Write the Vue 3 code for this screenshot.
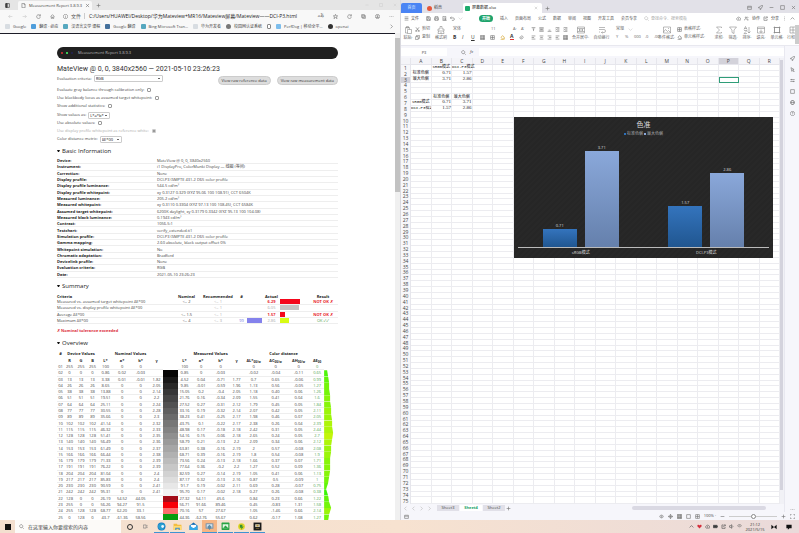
<script setup>
import { h } from 'vue'

const paths = {
  file: 'M3 1h7l3 3v11H3zM10 1v4h3',
  panel: 'M2 2h12v12H2zM3 2h4v12H3zM4 2v12M5 2v12M6 2v12',
  close: 'M3 3l10 10M13 3L3 13',
  plus: 'M8 2v12M2 8h12',
  minus: 'M2 8h12',
  back: 'M14 8H2M7 3L2 8l5 5',
  forward: 'M2 8h12M9 3l5 5-5 5',
  reload: 'M13 5a6 6 0 1 0 1 4M14 1v5H9',
  home: 'M2 8l6-6 6 6M4 7v7h3v-4h2v4h3V7',
  info: 'M8 1a7 7 0 1 0 .1 0M8 7v5M8 4v1',
  star: 'M8 1l2 5h5l-4 3 2 6-5-4-5 4 2-6-4-3h5z',
  box: 'M2 2h12v12H2z',
  win: 'M2 4h12v10H2zM2 7h12',
  stack: 'M2 2h9v9H2zM5 11v3h9V5h-3M4 6h5M6 4v5',
  user: 'M8 1a7 7 0 1 0 .1 0M8 4a2 2 0 1 0 .1 0M4 12c1-4 7-4 8 0M5 11h6',
  dots: 'M2 8h2M7 8h2M12 8h2',
  vdots: 'M8 2v2M8 7v2M8 12v2',
  chevron: 'M5 2l6 6-6 6',
  left: 'M11 2L5 8l6 6',
  up: 'M2 11l6-6 6 6',
  down: 'M2 5l6 6 6-6',
  search: 'M7 2a5 5 0 1 0 .1 0M11 11l4 4',
  menu: 'M2 3h12M2 8h12M2 13h12',
  save: 'M2 2h9l3 3v9H2zM5 2v4h5V2M5 14V9h6v5',
  print: 'M4 6V1h8v5M4 12H1V6h14v6h-3M4 9h8v6H4z',
  preview: 'M3 1h9v14H3zM6 8a3 3 0 1 0 5 0 3 3 0 0 0-5 0M10 11l4 4',
  undo: 'M5 2L1 6l4 4M1 6h9a4 4 0 0 1 0 8H6',
  paste: 'M3 3h8v4M3 3v11h4M5 1h4v3H5zM7 7h8v8H7z',
  cut: 'M3 1l8 10M13 1L5 11M4 11a2 2 0 1 0 .1 0M12 11a2 2 0 1 0 .1 0',
  copy: 'M2 5h8v10H2zM5 5V1h9v10h-4',
  brush: 'M6 1h4v5h4v4H2V6h4zM3 10l-1 5h12l-1-5M8 12v3',
  grid: 'M1 1h14v14H1zM1 6h14M1 11h14M6 1v14M11 1v14',
  table: 'M2 2h12v12H2zM2 8h12M8 2v12',
  bucket: 'M3 7l6-5 5 6-6 5zM14 9v4M2 15h12',
  image: 'M1 2h14v12H1zM1 12l4-5 4 4 2-2 4 4M11 4v2',
  eraser: 'M6 13l-4-4 7-7 5 5-6 6zM5 6l5 5',
  lines: 'M2 3h12M2 8h8M2 13h12',
  center: 'M2 3h12M4 8h8M2 13h12',
  right: 'M2 3h12M6 8h8M2 13h12',
  top: 'M2 2h12M5 6h6M8 6v7',
  bottom: 'M2 14h12M5 10h6',
  indent: 'M2 2h12M7 6h7M7 10h7M2 14h12M2 6l3 2-3 2',
  merge: 'M1 2h14v12H1zM1 5h14M1 11h14M4 8h8M6 6L4 8l2 2M10 6l2 2-2 2',
  wrap: 'M2 3h12M2 7h10a3 3 0 0 1 0 6H7M9 11l-2 2 2 2M2 12h2',
  sum: 'M13 4V2H3l6 6-6 6h10v-2',
  filter: 'M1 2h14l-5 6v7l-4-2V8z',
  sort: 'M2 7l3-6 3 6M3 5h4M2 9h6l-6 6h6M12 2v12M9 11l3 3 3-3',
  fill: 'M1 2h14v12H1zM1 5h14M8 7v6M5 10l3 3 3-3',
  cell: 'M3 3h10v10H3zM3 1v14M13 1v14M1 3h14M1 13h14',
  cloud: 'M4 13a4 4 0 0 1 0-7 5 5 0 0 1 9 1 3 3 0 0 1 0 6zM8 7v4',
  people: 'M6 3a2 2 0 1 0 .1 0M1 14c1-7 9-7 10 0M11 3c3 1 2 4 0 4M13 14c0-3-1-4-2-5',
  share: 'M8 3H3v11h10V9M7 10c0-5 3-6 7-6M11 1l4 3-4 3',
  rocket: 'M15 1C8 1 5 6 4 9l3 3c3-1 8-4 8-11zM4 9H1l3-4M7 12v3l4-3M10 6h1',
  cursor: 'M3 2l10 6-5 1-2 5zM11 10v5h4',
  sliders: 'M1 5h14M1 11h14M5 3v4M11 9v4',
  globe: 'M8 1a7 7 0 1 0 .1 0M1 8h14M8 1c-5 5-5 9 0 14 5-5 5-9 0-14',
  help: 'M8 1a7 7 0 1 0 .1 0M6 6c0-3 5-2 4 0L8 9M8 11v1',
  expand: 'M1 5V1h4M11 1h4v4M15 11v4h-4M5 15H1v-4',
  eye: 'M1 8c4-6 10-6 14 0-4 6-10 6-14 0M8 6a2 2 0 1 0 .1 0',
  target: 'M8 3a5 5 0 1 0 .1 0M8 0v16M0 8h16',
  wifi: 'M1 6c4-5 10-5 14 0M4 9c3-3 5-3 8 0M8 12v1',
  speaker: 'M1 6h3l4-4v12L4 10H1zM11 5c2 2 2 4 0 6',
  battery: 'M1 4h12v8H1zM13 7h2v2h-2M3 6h8v4H3z',
  task: 'M1 3h9v10H1zM13 3v3M13 8v5',
}
const Icon = (p) => h('svg', { viewBox: '0 0 16 16', class: 'icon', 'aria-hidden': 'true' }, [h('path', { d: paths[p.n] })])
Icon.props = ['n']

const bookmarks = [
  { t: 'Google', c: 'pale' }, { t: '翻译 · 必应', c: 'blue' }, { t: '汉语言文学 课程', c: 'teal' },
  { t: 'Google 翻译', c: 'navy' }, { t: 'Bing Microsoft Tran…', c: 'teal' }, { t: '华为开发者', c: 'pale' },
  { t: '校园网认证系统', c: 'gray' }, { t: '', c: 'doc' }, { t: 'PerfDog | 移动全平…', c: 'sky' }, { t: 'openai', c: 'black' },
]
const info = [
  ['Device', 'MateView @ 0, 0, 3840x2560'],
  ['Instrument', 'i1 DisplayPro, ColorMunki Display — 线圈 (等间)'],
  ['Correction', 'None'],
  ['Display profile', 'DCI-P3 (SMPTE 431-2 D65 color profile'],
  ['Display profile luminance', '544.5 cd/m²'],
  ['Display profile whitepoint', 'xy 0.3127 0.329 (XYZ 95.06 100 108.91), CCT 6504K'],
  ['Measured luminance', '205.2 cd/m²'],
  ['Measured whitepoint', 'xy 0.3110 0.3304 (XYZ 97.13 100 108.45), CCT 6584K'],
  ['Assumed target whitepoint', '6200K daylight, xy 0.3179 0.3342 (XYZ 95.13 100 104.08)'],
  ['Measured black luminance', '0.1943 cd/m²'],
  ['Contrast', '1056.5:1'],
  ['Testchart', 'verify_extended.ti1'],
  ['Simulation profile', 'DCI-P3 (SMPTE 431-2 D65 color profile'],
  ['Gamma mapping', '2.60 absolute, black output offset 0%'],
  ['Whitepoint simulation', 'No'],
  ['Chromatic adaptation', 'Bradford'],
  ['Devicelink profile', 'None'],
  ['Evaluation criteria', 'RGB'],
  ['Date', '2021-05-10 23:26:23'],
]
const summary = [
  { n: 'Measured vs. assumed target whitepoint ΔE*00', a: '<= 2', r: '<= 1', v: '6.29', w: 20, c: 'red', res: 'NOT OK ✗', bad: true },
  { n: 'Measured vs. display profile whitepoint ΔE*00', a: '', r: '<= 1', v: '6.05', w: 19, c: 'silver', res: '' },
  { n: 'Average ΔE*00', a: '<= 1.5', r: '<= 1', v: '1.57', w: 5, c: 'red', res: 'NOT OK ✗', bad: true },
  { n: 'Maximum ΔE*00', a: '<= 4', r: '<= 3', p: '99', v: '2.86', w: 9, c: 'lime', res: 'OK ✓✓' },
]
const raw = `01 255 255 255 100 0 0 _ 100 0 0 _ 0 0 0 0
02 0 0 0 0.86 0.02 -0.03 _ 0.85 0 -0.03 _ -0.02 -0.04 -0.11 0.65
03 13 13 13 3.38 0.01 -0.01 1.82 4.52 0.04 -0.71 1.77 0.7 0.65 -0.06 0.99
04 26 26 26 8.65 0 0 2.05 9.85 -0.01 -0.59 1.96 1.13 0.56 -0.05 1.27
05 38 38 38 13.88 0 0 2.14 15.05 0.2 -0.4 2.05 1.18 0.40 0.06 1.26
06 51 51 51 19.51 0 0 2.2 21.76 0.16 -0.34 2.09 1.55 0.41 0.04 1.6
07 64 64 64 25.11 0 0 2.24 27.52 0.27 -0.31 2.12 1.79 0.45 0.05 1.84
08 77 77 77 30.55 0 0 2.28 33.16 0.19 -0.32 2.14 2.07 0.42 0.05 2.11
09 89 89 89 35.66 0 0 2.3 38.23 0.41 -0.25 2.17 1.98 0.46 0.07 2.05
10 102 102 102 41.14 0 0 2.32 43.75 0.1 -0.22 2.17 2.38 0.26 0.04 2.39
11 115 115 115 46.32 0 0 2.33 48.98 0.17 -0.18 2.18 2.42 0.31 0.05 2.44
12 128 128 128 51.41 0 0 2.35 54.16 0.15 -0.06 2.18 2.65 0.24 0.05 2.7
13 140 140 140 56.49 0 0 2.36 58.79 0.21 -0.13 2.2 2.09 0.34 0.06 2.12
14 153 153 153 61.49 0 0 2.37 63.81 0.38 -0.16 2.19 2 0.57 -0.08 2.08
15 166 166 166 66.44 0 0 2.38 68.71 0.39 -0.16 2.19 1.8 0.54 -0.08 1.9
16 179 179 179 71.33 0 0 2.39 73.56 0.24 -0.13 2.18 1.66 0.37 0.07 1.71
17 191 191 191 76.22 0 0 2.39 77.64 0.36 -0.2 2.2 1.27 0.52 0.09 1.36
18 204 204 204 81.04 0 0 2.4 82.59 0.27 -0.14 2.19 1.05 0.41 0.06 1.13
19 217 217 217 85.83 0 0 2.4 87.17 0.32 -0.13 2.16 0.87 0.5 -0.09 1
20 230 230 230 90.59 0 0 2.41 91.7 0.19 -0.02 2.11 0.69 0.28 -0.07 0.75
21 242 242 242 95.31 0 0 2.41 95.70 0.17 -0.02 2.18 0.27 0.26 -0.08 0.38
22 128 0 0 26.19 54.52 44.05 _ 27.32 54.11 45.6 _ 0.84 0.23 0.66 1.22
23 255 0 0 56.26 94.27 91.5 _ 56.71 91.66 89.46 _ 0.45 -0.83 1.31 1.58
24 255 128 128 68.77 62.20 33.1 _ 70.16 57 27.67 _ 1.05 -1.46 0.66 2.14
25 0 128 0 43.7 -61.36 58.56 _ 44.36 -62.76 55.67 _ 0.62 -0.17 1.08 1.27
26 0 255 0 87.73 -96.21 92.41 _ 86.92 -97.14 91.03 _ -0.77 0.12 1.14 1.20`
const widths = [0, 3, 4, 5, 5, 6, 6, 7, 7, 8, 8, 9, 8, 7, 7, 6, 6, 6, 5, 4, 2, 4, 5, 7, 5, 4, 4]
const colours = { 22: '#a30d18', 23: '#f80008', 24: '#fb6d6d', 25: '#079c10', 26: '#06c90a' }
const rows = raw.split('\n').map((line, i) => {
  const v = line.split(' ').map((x) => (x === '_' ? '' : x))
  const g = Math.round(Math.pow((i - 1) / 19, 0.85) * 236) + 6
  const sw = i === 0 ? '#fff' : i > 20 ? colours[i + 1] : `rgb(${g},${g},${g})`
  const a = widths[i], b = widths[i + 1] || a
  return {
    v, sw,
    bar: i ? { background: `hsl(${118 - a * 5}, 92%, 50%)`, clipPath: `polygon(0 0, ${a}px 0, ${b}px 100%, 0 100%)` } : {},
  }
})

const menus = ['插入', '页面布局', '公式', '数据', '审阅', '视图', '开发工具', '会员专享']
const cols = 'ABCDEFGHIJKLMNOPQR'.split('')
const cells = {
  B1: 'sRGB模式', C1: 'DCI-P3模式', A2: '标准色偏', B2: '0.71', C2: '1.57', A3: '最大色偏', B3: '3.71', C3: '2.86',
  B6: '标准色偏', C6: '最大色偏', A7: 'sRGB模式', B7: '0.71', C7: '3.71', A8: 'DCI-P3模式', B8: '1.57', C8: '2.86',
}
const groups = [
  { name: 'sRGB模式', a: 0.71, b: 3.71 },
  { name: 'DCI-P3模式', a: 1.57, b: 2.86 },
]
const bar = (x) => ({ height: Math.round(x * 26) + 'px' })
</script>

<template>
  <div class="desktop">
    <section class="browser">
      <div class="tabs">
        <Icon n="panel" class="dark" />
        <div class="tab"><Icon n="file" /><span>Measurement Report 3.8.9.3</span><button aria-label="Close tab"><Icon n="close" /></button></div>
        <button aria-label="New tab"><Icon n="plus" /></button>
        <div class="winctl"><Icon n="minus" /><Icon n="box" /><Icon n="close" /></div>
      </div>
      <div class="address">
        <div class="nav"><Icon n="back" class="faint" /><Icon n="forward" class="faint" /><Icon n="reload" /><Icon n="home" /></div>
        <div class="url"><Icon n="info" /><span>文件</span><i></i><span class="path">C:/Users/HUAWEI/Desktop/华为Mateview+MR16/Mateview屏幕/Mateview——DCI-P3.html</span></div>
        <div class="acts"><span>aあ</span><Icon n="star" /><Icon n="reload" /><Icon n="stack" /><Icon n="user" /><Icon n="dots" /></div>
      </div>
      <div class="marks">
        <a v-for="(b, i) in bookmarks" :key="i" href="#"><i :class="b.c"></i>{{ b.t }}</a>
        <Icon n="chevron" class="more" />
      </div>
      <div class="view">
        <main class="report">
          <header><i class="r"></i><i class="g"></i><i class="b"></i>Measurement Report 3.8.9.3</header>
          <h1>MateView @ 0, 0, 3840x2560 — 2021-05-10 23:26:23</h1>
          <div class="criteria">
            <label>Evaluation criteria: <select class="wide"><option>RGB</option></select></label>
            <div class="btns"><button>View raw reference data</button><button>View raw measurement data</button></div>
          </div>
          <div class="opts">
            <label>Evaluate gray balance through calibration only: <input type="checkbox"></label>
            <label>Use blackbody locus as assumed target whitepoint: <input type="checkbox"></label>
            <label>Show additional statistics: <input type="checkbox"></label>
          </div>
          <div class="opts second">
            <label>Show values as: <select><option>L*a*b*</option></select></label>
            <label>Use absolute values: <input type="checkbox"></label>
            <label class="off">Use display profile whitepoint as reference white: <input type="checkbox" disabled checked></label>
            <label>Color distance metric: <select><option>ΔE*00</option></select></label>
          </div>
          <h2><i></i>Basic Information</h2>
          <table class="info">
            <tbody><tr v-for="r in info" :key="r[0]"><th>{{ r[0] }}:</th><td>{{ r[1] }}</td></tr></tbody>
          </table>
          <h2><i></i>Summary</h2>
          <table class="sum">
            <colgroup><col class="w116"><col class="w27"><col class="w36"><col class="w11"><col class="w16"><col class="w17"><col class="w28"><col class="w30"></colgroup>
            <thead><tr><th class="l">Criteria</th><th>Nominal</th><th>Recommended</th><th>#</th><th></th><th>Actual</th><th></th><th>Result</th></tr></thead>
            <tbody>
              <tr v-for="s in summary" :key="s.n">
                <td class="l">{{ s.n }}</td><td>{{ s.a }}</td><td class="pale">{{ s.r }}</td><td class="violet">{{ s.p }}</td>
                <td><b v-if="s.p" class="meter purple"></b></td>
                <td :class="s.bad ? 'bad' : 'pale'">{{ s.v }}</td>
                <td><b class="meter" :class="s.c" :style="{ width: s.w + 'px' }"></b></td>
                <td :class="s.bad ? 'bad' : 'good'">{{ s.res }}</td>
              </tr>
            </tbody>
          </table>
          <p class="note">✗ Nominal tolerance exceeded</p>
          <h2><i></i>Overview</h2>
          <table class="over">
            <colgroup><col class="w7"><col class="w11"><col class="w12"><col class="w11"><col class="w15"><col class="w18"><col class="w19"><col class="w13"><col class="w15"><col class="w13"><col class="w20"><col class="w19"><col class="w13"><col class="w21"><col class="w23"><col class="w23"><col class="w14"><col class="w14"></colgroup>
            <thead>
              <tr><th>#</th><th colspan="3">Device Values</th><th colspan="4">Nominal Values</th><th></th><th colspan="4">Measured Values</th><th colspan="4">Color distance</th><th></th></tr>
              <tr><th></th><th>R</th><th>G</th><th>B</th><th>L*</th><th>a*</th><th>b*</th><th>γ</th><th></th><th>L*</th><th>a*</th><th>b*</th><th>γ</th><th>ΔL*<sub>00/w</sub></th><th>ΔC<sub>00/w</sub></th><th>ΔH<sub>00/w</sub></th><th>ΔE<sub>00</sub></th><th></th></tr>
            </thead>
            <tbody>
              <tr v-for="r in rows" :key="r.v[0]">
                <td v-for="c in 8" :key="c">{{ r.v[c - 1] }}</td>
                <td class="chip" :style="{ background: r.sw }"></td>
                <td v-for="c in 7" :key="'m' + c">{{ r.v[c + 7] }}</td>
                <td class="good">{{ r.v[15] }}</td>
                <td class="chip" :style="r.bar"></td>
              </tr>
            </tbody>
          </table>
        </main>
        <div class="scroll"><b></b></div>
      </div>
    </section>

    <section class="office">
      <div class="wtabs">
        <button class="homebtn">首页</button>
        <div class="wtab"><i></i>稻壳</div>
        <div class="wtab on"><i class="sheeticon"></i>屏幕数据.xlsx<Icon n="close" /></div>
        <Icon n="plus" />
        <div class="winctl"><Icon n="win" /><Icon n="rocket" /><Icon n="minus" /><Icon n="box" /><Icon n="close" /></div>
      </div>
      <nav class="menu">
        <span class="filem"><Icon n="menu" />文件</span>
        <span class="quick"><Icon n="save" /><Icon n="print" /><Icon n="preview" /><Icon n="undo" /><Icon n="down" class="faint" /></span>
        <button class="start">开始</button>
        <button v-for="m in menus" :key="m">{{ m }}</button>
        <label class="find"><Icon n="search" /><input placeholder="查找命令、搜索模板" aria-label="查找命令"></label>
        <span class="team"><Icon n="cloud" /><Icon n="people" />协作<Icon n="share" />分享<Icon n="vdots" /><Icon n="up" /></span>
      </nav>
      <div class="ribbon">
        <div class="big w14"><Icon n="paste" /><span>粘贴·</span></div>
        <div class="pair w18"><span><Icon n="cut" />剪切</span><span><Icon n="copy" />复制</span></div>
        <div class="big w16"><Icon n="brush" /><span>格式刷</span></div>
        <div class="pair font">
          <span><em>宋体</em><em>11</em><em>A⁺</em><em>A⁻</em></span>
          <span><b>B</b><i>I</i><u>U</u><Icon n="grid" /><Icon n="table" /><Icon n="bucket" class="gold" /><b class="aclr">A</b><Icon n="eraser" /></span>
        </div>
        <div class="pair align">
          <span><Icon n="top" /><Icon n="center" class="hl" /><Icon n="bottom" /><Icon n="indent" /><Icon n="indent" /></span>
          <span><Icon n="lines" /><Icon n="center" /><Icon n="right" /><Icon n="lines" /><Icon n="grid" /></span>
        </div>
        <div class="big w21"><Icon n="merge" /><span>合并居中·</span></div>
        <div class="big w21"><Icon n="wrap" /><span>自动换行</span></div>
        <div class="pair num"><span><em>常规</em><Icon n="down" class="faint" /></span><span><em>¥</em><em>%</em><em>000</em><em>.0</em><em>.00</em></span></div>
        <div class="big w21"><Icon n="image" /><span>条件格式·</span></div>
        <div class="pair w35"><span><Icon n="table" />表格样式·</span><span><Icon n="bucket" />单元格样式·</span></div>
        <div class="big w14"><Icon n="sum" /><span>求和·</span></div>
        <div class="big w14"><Icon n="filter" /><span>筛选·</span></div>
        <div class="big w14"><Icon n="sort" /><span>排序·</span></div>
        <div class="big w14"><Icon n="fill" /><span>填充·</span></div>
        <div class="big w18"><Icon n="cell" /><span>单元格·</span></div>
        <div class="big w14"><Icon n="table" /><span>行和列</span></div>
      </div>
      <div class="work">
        <div class="book">
          <div class="formula"><input class="ref" value="P3" aria-label="Name box"><span><Icon n="search" /><i>fx</i></span><input class="fx" aria-label="Formula"></div>
          <div class="sheet">
            <table>
              <colgroup><col class="rn"></colgroup>
              <thead><tr><th></th><th v-for="c in cols" :key="c" :class="{ sel: c === 'P' }">{{ c }}</th></tr></thead>
              <tbody>
                <tr v-for="r in 75" :key="r">
                  <th :class="{ sel: r === 3 }">{{ r }}</th>
                  <td v-for="c in cols" :key="c" :class="{ cur: c + r === 'P3', num: /^\d/.test(cells[c + r] || ''), clip: c + r === 'A8' }">{{ cells[c + r] }}</td>
                </tr>
              </tbody>
            </table>
            <div class="vbar"><b></b></div>
            <figure class="chart">
              <figcaption>色准</figcaption>
              <div class="legend"><i></i>标准色偏<i class="two"></i>最大色偏</div>
              <div class="plot">
                <div v-for="g in groups" :key="g.name" class="group">
                  <div class="col">{{ g.a }}<b :style="bar(g.a)"></b></div>
                  <div class="col">{{ g.b }}<b class="two" :style="bar(g.b)"></b></div>
                </div>
              </div>
              <div class="axis"><span v-for="g in groups" :key="g.name">{{ g.name }}</span></div>
            </figure>
          </div>
          <div class="sheets">
            <span class="arrows"><Icon n="left" /><Icon n="left" /><Icon n="chevron" /><Icon n="chevron" /></span>
            <button>Sheet3</button><button class="on">Sheet4</button><button>Sheet2</button><Icon n="plus" />
            <div class="hbar"></div>
          </div>
        </div>
        <aside><Icon n="rocket" /><Icon n="cursor" /><Icon n="sliders" /><Icon n="box" /><Icon n="globe" /><Icon n="help" /><Icon n="dots" class="last" /></aside>
      </div>
      <div class="status">
        <Icon n="win" /><span class="sp"></span><Icon n="eye" /><Icon n="target" /><Icon n="grid" class="lit" /><Icon n="box" /><Icon n="table" />
        <span>100% ·</span><Icon n="minus" /><input type="range" value="50" aria-label="Zoom"><Icon n="plus" /><Icon n="expand" />
      </div>
    </section>

    <footer class="taskbar">
      <button class="win" aria-label="Start"><i></i><i></i><i></i><i></i></button>
      <label class="ask"><Icon n="search" /><input placeholder="在这里输入你要搜索的内容" aria-label="Search"></label>
      <button aria-label="Cortana"><i class="ring"></i></button>
      <button aria-label="Task view"><Icon n="task" /></button>
      <button class="run" aria-label="Edge"><svg viewBox="0 0 16 16"><circle cx="8" cy="8" r="7" fill="#167bc4" /><path d="M2 6c3-6 12-5 13 2H8c0 3 4 4 6 3-5 7-14 1-12-5" fill="#2a9fd0" /><circle cx="10" cy="8" r="2.5" fill="#e8f8ff" /></svg></button>
      <button class="run" aria-label="Explorer"><svg viewBox="0 0 16 16"><path d="M1 3h6l1 2h7v9H1z" fill="#f3bd3e" /><path d="M1 7h14v7H1z" fill="#ffdb74" /><path d="M4 10h8v4H10v-2H6v2H4z" fill="#3d8ed0" /></svg></button>
      <button aria-label="Mail"><svg viewBox="0 0 16 16"><path d="M1 6l7-5 7 5v8H1z" fill="#0a68b4" /><path d="M3 5h10v6H3z" fill="#fff" /><path d="M1 6l7 5 7-5v8H1z" fill="#35a8e8" /></svg></button>
      <button class="run act" aria-label="DisplayCAL"><svg viewBox="0 0 16 16"><rect x="1" y="2" width="14" height="10" rx="1" fill="#8096ab" /><path d="M3 4h10v6H3z" fill="#d5e4ef" /><path d="M8 5l4 4-4 5-4-5z" fill="#5a8ba8" /></svg></button>
      <button class="run" aria-label="Sheets"><svg viewBox="0 0 16 16"><rect x="1" y="1" width="14" height="13" rx="1" fill="#27a344" /><path d="M3 4h10v7H3z" fill="#e3f8e5" /><path d="M4 10l4-4 5 5z" fill="#27a344" /></svg></button>
      <button class="run" aria-label="Tool"><svg viewBox="0 0 16 16"><circle cx="8" cy="8" r="6" fill="#e2d529" /><path d="M5 5h5l-1 3h3l-5 6 1-4H5z" fill="#37932d" /></svg></button>
      <button class="run" aria-label="Monitor"><svg viewBox="0 0 16 16"><rect x="1" y="1" width="14" height="14" fill="#1b1b1b" /><path d="M4 4h8v5H4z" fill="#e5dfcc" /><path d="M6 5h4v3H6zM5 11h6v1H5z" fill="#ad8d3a" /></svg></button>
      <div class="tray">
        <Icon n="up" /><svg class="icon heart" viewBox="0 0 16 16"><path d="M8 14L1 7c0-6 6-5 7-2 1-3 7-4 7 2z" /></svg><Icon n="cloud" /><Icon n="battery" class="solid" /><Icon n="share" /><Icon n="speaker" /><Icon n="wifi" />
        <time>21:12<br>2021/5/15</time>
        <svg class="icon ime" viewBox="0 0 16 16"><path d="M1 2l14 12V2L1 14z" /></svg>
        <svg class="icon msg" viewBox="0 0 16 16"><path d="M1 2h14v9H9l-4 4v-4H1z" /></svg>
      </div>
    </footer>
  </div>
</template>

<style>
body { margin: 0; overflow: hidden; }
</style>

<style scoped>
* { box-sizing: border-box; }
.desktop { height: 100vh; display: grid; grid-template: minmax(0, 1fr) 13px / minmax(0, 400fr) minmax(0, 399fr); font: 4px/6px "Open Sans", "Noto Sans CJK SC", sans-serif; color: #444; background: #fff; overflow: hidden; }
button, input, select { font: inherit; color: inherit; margin: 0; padding: 0; border: 0; background: none; min-width: 0; }
button { display: flex; align-items: center; justify-content: center; white-space: nowrap; }
select { appearance: none; }
a { color: inherit; text-decoration: none; }
.icon { width: 5px; height: 5px; flex: none; fill: none; stroke: #777; stroke-width: 2; }
.icon.dark { stroke: #333; }
.icon.faint { stroke: #ccc; }

.browser { display: flex; flex-direction: column; min-height: 0; overflow: hidden; }
.tabs { height: 10px; display: flex; align-items: center; background: #e5e5e5; padding-left: 5px; gap: 4px; }
.tab { align-self: stretch; margin-top: 1px; width: 74px; margin-left: 4px; padding: 0 3px; display: flex; align-items: center; gap: 3px; background: #f8f8f8; border-radius: 2px 2px 0 0; }
.tab span { flex: 1; white-space: nowrap; }
.winctl { margin-left: auto; display: flex; gap: 9px; padding-right: 3px; align-items: center; }
.tabs .winctl { gap: 10px; }
.tabs .winctl .icon { stroke: #ccc; width: 4px; height: 4px; }
.address { height: 12px; display: flex; align-items: center; background: #f8f8f8; padding: 0 6px 0 8px; font-size: 5px; }
.nav { display: flex; width: 55px; gap: 9px; }
.url { display: flex; align-items: center; gap: 3px; flex: 1; white-space: nowrap; color: #555; }
.url > i { width: 1px; height: 6px; background: #ccc; margin-right: 1px; }
.url .path { color: #222; }
.acts { display: flex; align-items: center; gap: 9px; }
.acts span { font-size: 4px; }
.marks { height: 11px; display: flex; align-items: center; gap: 5px; padding: 0 6px 2px 5px; background: #f8f8f8; white-space: nowrap; }
.marks a { display: flex; align-items: center; gap: 3px; }
.marks a i { width: 5px; height: 5px; border-radius: 1px; background: #4f9edb; }
.marks a .pale { background: #d8dde2; }
.marks a .teal { background: #56a8bf; }
.marks a .navy { background: #44709c; }
.marks a .gray { background: #777; border-radius: 50%; }
.marks a .sky { background: #7cbdec; }
.marks a .black { background: #333; border-radius: 50%; }
.marks a .doc { background: #fff; border: 1px solid #888; width: 4px; }
.marks .more { margin-left: auto; }
.view { flex: 1; min-height: 0; display: flex; }
.report { flex: 1; border-top: 1px solid #1d1d28; padding: 13px 57px 0; min-height: 0; overflow: hidden; background: #fff; }
.scroll { width: 5px; background: #f0f0f0; padding-top: 5px; }
.scroll b { display: block; height: 154px; background: #c2c2c2; }
.report header { height: 12px; border-radius: 6px; background: #202020; color: #bbb; display: flex; align-items: center; padding-left: 4px; }
.report header i { width: 2px; height: 2px; border-radius: 50%; margin-right: 3px; }
.report header .r { background: #d33; }
.report header .g { background: #4f6; }
.report header .b { background: #225; margin-right: 5px; }
h1 { font: 400 7px/10px Roboto, sans-serif; margin: 5px 0 0; white-space: nowrap; color: #333; }
.criteria { display: flex; justify-content: space-between; height: 12px; }
.criteria label, .opts label { display: flex; align-items: center; gap: 2px; white-space: nowrap; }
.criteria label { align-self: start; padding-top: 1px; }
select { border: 1px solid #ccc; border-radius: 1px; height: 7px; width: 22px; padding-left: 1px; font-size: 4px; line-height: 5px; color: #111; background: linear-gradient(#666, #666) no-repeat right 2px center / 2px 1px #fff; }
select.wide { width: 69px; }
.btns { display: flex; gap: 6px; padding-top: 2px; }
.btns button { height: 9px; border-radius: 5px; background: #ddd; border: 1px solid #ccc; padding: 0 3px; color: #333; }
.opts { display: grid; grid-auto-rows: 8px; }
.opts.second { margin-top: 1px; }
.opts input { appearance: none; width: 4px; height: 4px; border: 1px solid #999; border-radius: 1px; margin-left: 1px; background: #fff; }
.opts .off { color: #aaa; }
.opts .off input { border-color: #ccc; background: #999; }
h2 { font-size: 6px; line-height: 8px; font-weight: 400; color: #222; margin: 4px 0 3px; display: flex; align-items: center; gap: 2px; }
h2 i { border: 1px solid transparent; border-top: 2px solid #111; width: 3px; height: 3px; }
table { width: 100%; border-collapse: separate; border-spacing: 0; table-layout: fixed; }
th, td { padding: 0; font-weight: 400; white-space: nowrap; text-align: center; line-height: 5px; }
.info { height: 120px; }
.info th { width: 100px; text-align: left; font-weight: 700; color: #222; }
.info td { text-align: left; }
.info td, .info th, .sum td, .over td { border-bottom: 1px solid #eee; }
.sum { height: 31px; }
.sum thead th { height: 6px; }
.sum th, .over th { font-weight: 700; color: #222; }
.sum .l { text-align: left; }
.pale { color: #aaa; }
td.bad { color: #e8202c; font-weight: 700; }
.good { color: #55a555; }
.violet { color: #7777dd; }
.meter { display: block; height: 5px; }
.red { background: #f4071b; }
.silver { background: #c6c2c2; }
.lime { background: #d8fb14; }
.purple { background: #8482ec; width: 15px; }
.note { margin: 4px 0 5px; color: #dc2f3c; font-weight: 700; }
.over { height: 177px; }
.over thead th { height: 7px; }
.over td.chip { border: 0; }
sub { font-size: 3px; line-height: 1px; vertical-align: -1px; }
.w7 { width: 7px; } .w11 { width: 11px; } .w12 { width: 12px; } .w13 { width: 13px; } .w14 { width: 14px; }
.w15 { width: 15px; } .w16 { width: 16px; } .w17 { width: 17px; } .w18 { width: 18px; } .w19 { width: 19px; }
.w20 { width: 20px; } .w21 { width: 21px; } .w23 { width: 23px; } .w27 { width: 27px; } .w28 { width: 28px; }
.w30 { width: 30px; } .w35 { width: 35px; } .w36 { width: 36px; } .w116 { width: 116px; }

.office { display: flex; flex-direction: column; min-height: 0; overflow: hidden; border-left: 1px solid #d8d8de; background: #fff; }
.wtabs { height: 13px; display: flex; align-items: center; background: #e2e1e8; padding-top: 3px; gap: 3px; }
.homebtn { width: 21px; align-self: stretch; background: #4a84f4; color: #dce8ff; border-radius: 2px 2px 0 0; }
.wtab { width: 35px; align-self: stretch; display: flex; align-items: center; gap: 2px; padding-left: 2px; }
.wtab.on { width: 79px; background: #fff; padding-right: 4px; color: #222; border-radius: 2px 2px 0 0; }
.wtab .icon { margin-left: auto; width: 4px; height: 4px; stroke: #bbb; }
.wtab i { width: 5px; height: 5px; border-radius: 50%; background: #e65639; }
.wtab .sheeticon { border-radius: 1px; background: #1eab6d; }
.wtabs .winctl { gap: 6px; padding-bottom: 2px; }
.menu { height: 11px; display: flex; align-items: center; gap: 7px; padding: 0 4px 0 3px; white-space: nowrap; }
.menu button { color: #555; }
.filem, .quick, .team, .find { display: flex; align-items: center; gap: 2px; }
.filem { width: 15px; }
.quick { gap: 3px; width: 46px; }
.menu .start { width: 14px; height: 7px; border-radius: 4px; background: #1ea36b; color: #fff; font-weight: 700; }
.find { color: #aaa; flex: 1; }
.find input { width: 100%; max-width: 48px; }
.find .icon { stroke: #bbb; }
input::placeholder { color: #aaa; opacity: 1; }
.team { gap: 3px; }
.ribbon { height: 22px; display: flex; border-bottom: 1px solid #e8e8ef; overflow: hidden; white-space: nowrap; color: #666; position: relative; }
.ribbon::after { content: ""; position: absolute; right: 0; top: 1px; width: 4px; height: 19px; background: #ccc; }
.ribbon > div { flex: none; }
.big { display: flex; flex-direction: column; align-items: center; gap: 1px; padding-top: 2px; }
.big .icon { width: 8px; height: 8px; stroke-width: 1; }
.pair { display: grid; grid-template-rows: 8px 8px; padding-top: 1px; }
.pair > span { display: flex; align-items: center; gap: 2px; }
.pair em { font-style: normal; }
.font { width: 79px; padding-left: 4px; }
.font > span { gap: 5px; font-size: 5px; }
.font > span:first-child { gap: 4px; font-size: 4px; }
.font em:first-child { width: 34px; }
.font em:nth-child(2) { width: 18px; }
.font b, .font i, .font u { width: 4px; color: #333; }
.icon.gold { stroke: #d7a52f; }
.font .aclr { border-bottom: 1px solid #d33; line-height: 5px; }
.align { width: 42px; padding-left: 3px; }
.align > span { gap: 3px; }
.align .hl { background: #ddd; }
.num { width: 44px; padding-left: 4px; }
.ribbon .num > span { gap: 4px; }
.ribbon .num em { min-width: 5px; }
.work { flex: 1; min-height: 0; display: flex; background: #f6f6fb; }
.book { flex: 1; min-width: 0; display: flex; flex-direction: column; }
.formula { height: 12px; padding: 2px 0; display: flex; align-items: center; gap: 14px; }
.formula input { background: #fff; height: 8px; text-align: center; }
.ref { width: 46px; }
.formula span { display: flex; gap: 4px; width: 18px; align-items: center; margin-right: -14px; }
.formula .fx { flex: 1; }
.sheet { flex: 1; min-height: 0; position: relative; display: flex; }
.sheet table { height: 100%; flex: 1; background: #fff; }
.rn { width: 10px; }
.sheet th { background: #f7f7fa; border: solid #e6e6ec; border-width: 0 1px 0 0; color: #444; line-height: 4px; height: 5px; }
.sheet tbody th { font-size: 5px; }
.sheet thead th { height: 7px; line-height: 6px; font-size: 5px; border-bottom-width: 1px; background: #f4f4f8; }
.sheet th.sel, .sheet thead th.sel { background: #d3d2da; }
.sheet td { border: solid #ececf0; border-width: 0 1px 1px 0; font: 4px/4px "Liberation Mono", "Noto Sans CJK SC", monospace; color: #222; }
.sheet td.num { width: auto; text-align: right; font: 5px/4px "Liberation Serif", serif; }
.sheet td.clip { overflow: hidden; }
.sheet td.cur { outline: 1px solid #2f9d78; outline-offset: -1px; }
.vbar { width: 4px; background: #f1f1f6; padding: 2px 1px 14px 0; display: flex; }
.vbar b { flex: 1; background: #d4d3dd; }
.chart { position: absolute; left: 113px; top: 59px; width: 259px; height: 141px; margin: 0; padding: 3px 4px 0; background: repeating-linear-gradient(135deg, #262626 0 2px, #282828 2px 4px); color: #ddd; text-align: center; display: flex; flex-direction: column; }
.chart figcaption { font-size: 7px; line-height: 9px; }
.legend { display: flex; justify-content: center; align-items: center; gap: 1px; line-height: 6px; margin-top: 2px; color: #aaa; }
.legend i { width: 2px; height: 2px; background: #2e70b8; }
.legend .two { background: #8aa8d8; }
.plot { flex: 1; display: flex; border-bottom: 1px solid #bbb; }
.group { flex: 1; display: flex; gap: 8px; justify-content: center; align-items: flex-end; }
.col { width: 34px; line-height: 7px; }
.col b { display: block; background: linear-gradient(#3474bd, #205690); }
.col .two { background: linear-gradient(#8aa8da, #6580ac); }
.axis { display: flex; height: 10px; line-height: 10px; }
.axis span { flex: 1; }
.sheets { height: 8px; display: flex; align-items: center; gap: 1px; padding-right: 18px; }
.arrows { width: 35px; display: flex; gap: 3px; padding-left: 2px; }
.arrows .icon { stroke: #bbb; }
.sheets button { width: 22px; height: 6px; background: #e1e0e8; }
.sheets .on { background: #fff; color: #1ea36b; font-weight: 700; }
.hbar { margin-left: auto; width: 134px; height: 4px; background: #dad9e3; border-radius: 2px; }
aside { width: 15px; display: flex; flex-direction: column; align-items: center; gap: 6px; padding-top: 10px; border-left: 1px solid #e8e8f0; }
aside .last { margin-top: auto; }
.status { height: 8px; display: flex; align-items: center; gap: 4px; padding: 0 4px 0 3px; background: #f6f6fb; }
.status .sp { flex: 1; }
.status .lit { background: #ddd; }
.status input { width: 48px; height: 5px; appearance: none; background: linear-gradient(#ccc, #ccc) no-repeat center / 100% 1px; }
.status input::-webkit-slider-thumb { appearance: none; width: 5px; height: 5px; border-radius: 50%; border: 1px solid #888; background: #fff; }

.taskbar { grid-column: 1 / -1; display: flex; align-items: stretch; background: linear-gradient(90deg, #f3dfcf, #f7e2d0 50%, #eadada); }
.taskbar > button { width: 15px; margin-right: 1px; }
.taskbar > button.win { width: 15px; margin: 0; display: grid; grid-template: 3px 3px / 3px 3px; place-content: center; place-items: stretch; }
.win i { background: #111; }
.ask { width: 106px; margin-right: 1px; background: #fcfaf8; display: flex; align-items: center; gap: 4px; padding-left: 4px; font-size: 5px; }
.ask input { flex: 1; }
.ask input::placeholder { color: #444; }
.ring { width: 6px; height: 6px; border: 1px solid #333; border-radius: 50%; }
.taskbar button svg:not(.icon) { width: 9px; height: 9px; }
.run { border-bottom: 1px solid #3f93d2; }
.act { background: #f6b584; }
.tray { margin-left: auto; display: flex; align-items: center; gap: 3px; padding-right: 7px; }
.tray .icon { stroke: #555; }
.tray .heart { fill: #d32f3c; stroke: none; }
.tray .solid { fill: #222; }
.tray time { line-height: 5px; text-align: center; width: 20px; margin-right: 3px; color: #333; }
.tray .ime, .tray .msg { width: 6px; height: 6px; fill: #111; stroke: none; margin-right: 6px; }
.tray .msg { margin-right: 0; }
</style>
